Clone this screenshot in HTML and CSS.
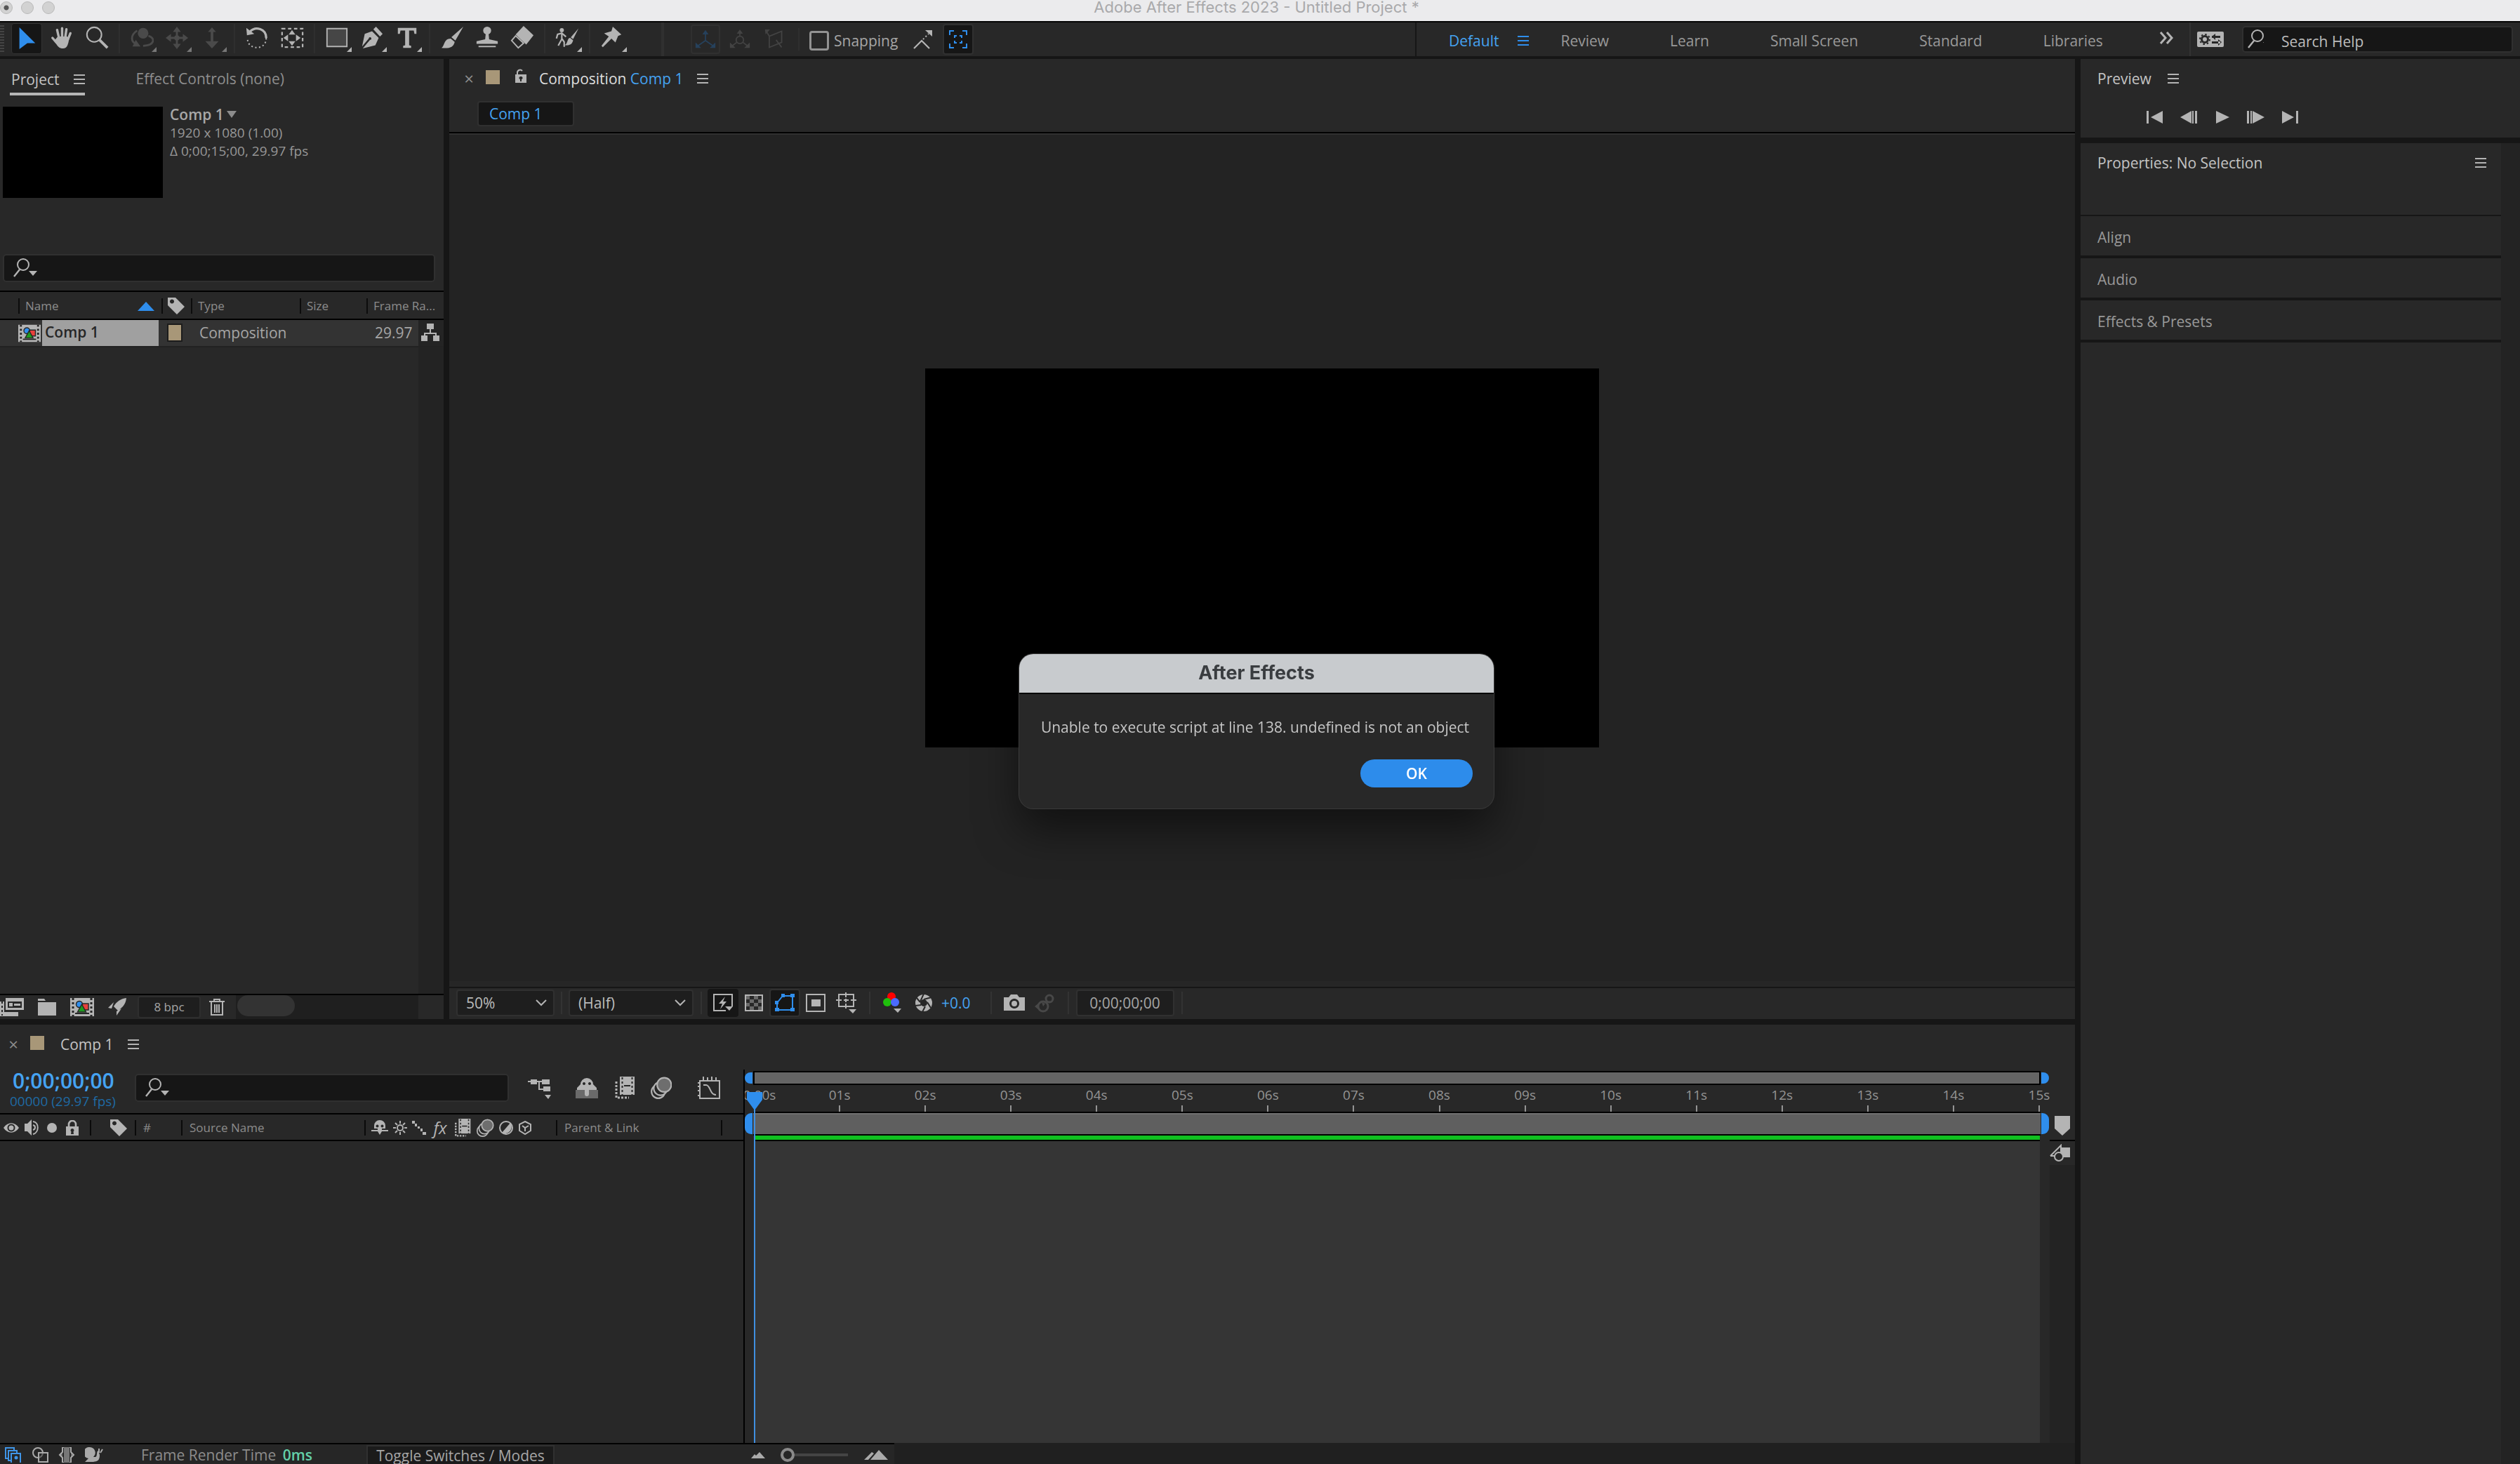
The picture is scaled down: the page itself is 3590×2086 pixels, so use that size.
FILE: index.html
```html
<!DOCTYPE html>
<html lang="en">
<head>
<meta charset="utf-8">
<title>Adobe After Effects 2023 - Untitled Project *</title>
<link rel="stylesheet" href="styles.css">
</head>
<body>
<svg class="defs" aria-hidden="true">
  <symbol id="menu" viewBox="0 0 16 14"><path fill="currentColor" d="M0 0h16v2H0zM0 6h16v2H0zM0 12h16v2H0z"/></symbol>
  <symbol id="find" viewBox="0 0 34 28"><circle cx="14" cy="9" r="8" fill="none" stroke="currentColor" stroke-width="2"/><path d="M9 16L1 26" stroke="currentColor" stroke-width="2.4"/><path class="drop" fill="currentColor" d="M22 18h12l-6 7z"/></symbol>
  <symbol id="tag" viewBox="0 0 24 24"><path fill="currentColor" fill-rule="evenodd" d="M0 0h11l13 13-11 11L0 11zM6 2.500a3 3 0 1 0 .01 0z"/></symbol>
  <symbol id="chev" viewBox="0 0 16 10"><path d="M1 1l7 7 7-7" fill="none" stroke="currentColor" stroke-width="2"/></symbol>
  <symbol id="film" viewBox="0 0 34 26"><path fill="#b4b4b4" d="M0 0h34v26H0z"/><path d="M4 0v26M30 0v26" stroke="#282828" stroke-width="3" stroke-dasharray="3 3"/><path d="M7 22h20" stroke="#282828" stroke-width="2"/><path fill="#e8413c" stroke="#282828" stroke-width="1.500" d="M16 8h10v9H16z"/><circle cx="13" cy="9" r="4.500" fill="#2f8eed" stroke="#282828" stroke-width="1.500"/><path fill="#1f9a1f" stroke="#282828" stroke-width="1.500" d="M16.500 9l6 11h-12z"/></symbol>
  <symbol id="shy" viewBox="0 0 24 22"><path fill="currentColor" fill-rule="evenodd" d="M4 12V8a8 8 0 0 1 16 0v4h-5v2h9v2h-9l-3 5-3-5H0v-2h9v-2zM8.500 6.500a2 2 0 1 0 .01 0zM15.500 6.500a2 2 0 1 0 .01 0z"/></symbol>
  <symbol id="frames" viewBox="0 0 28 32"><path fill="none" stroke="currentColor" stroke-width="3" stroke-dasharray="3 2" d="M2 7v23h18"/><path fill="currentColor" d="M7 0h21v26H7z"/><path d="M10.500 1v25M24.500 1v25" stroke="#282828" stroke-width="2" stroke-dasharray="3 3"/><path d="M13 13h9" stroke="#282828" stroke-width="2"/></symbol>
  <symbol id="blur" viewBox="0 0 28 30"><g fill="#282828" stroke="currentColor" stroke-width="2"><circle cx="10" cy="20" r="9"/><circle cx="13" cy="16" r="9"/><circle cx="18" cy="11" r="9.500" fill="#6e6e6e"/></g></symbol>
  <symbol id="corner" viewBox="0 0 8 8"><path fill="currentColor" d="M8 0v8H0z"/></symbol>
  <symbol id="lock" viewBox="0 0 18 22"><path d="M4 10V6a5 5 0 0 1 10 0v4" fill="none" stroke="currentColor" stroke-width="2.600"/><path fill="currentColor" fill-rule="evenodd" d="M0 9h18v13H0zM9 12a2.500 2.500 0 0 0-1.500 4.500L7 20h4l-.5-3.500A2.500 2.500 0 0 0 9 12z"/></symbol>
</svg>

<header class="titlebar">
  <span class="lights"><i class="on"></i><i></i><i></i></span>
  <h1>Adobe After Effects 2023 - Untitled Project *</h1>
</header>

<div class="toolbar">
  <div class="grip"></div>
  <div class="tools">
    <button class="tool active" aria-label="Selection"><svg viewBox="0 0 36 36"><path fill="#2f8eed" d="M7 1l24 24H19L7 34z"/></svg></button>
    <button class="tool" aria-label="Hand"><svg viewBox="0 0 36 36"><g fill="none" stroke="currentColor" stroke-width="3.600" stroke-linecap="round"><path d="M14 19L11 6M18.500 18V3.500M23 19l2-14M27 21l4-10M10 25l-6-7"/></g><path fill="currentColor" d="M12 16h14l3 3c-1 8-3 15-9 15-6 0-9-3-13-12z"/></svg></button>
    <button class="tool" aria-label="Zoom"><svg viewBox="0 0 36 36"><circle cx="14" cy="13" r="11" fill="none" stroke="currentColor" stroke-width="2.200"/><path d="M22 21l12 12" stroke="currentColor" stroke-width="4"/></svg></button>
    <span class="sep"></span>
    <button class="tool off" aria-label="Orbit"><svg viewBox="0 0 36 36"><circle cx="20" cy="11" r="8" fill="currentColor"/><path fill="none" stroke="currentColor" stroke-width="3" d="M11 7C0 14 2 24 9 27M20 30c20-1 17-13 8-15"/><path fill="currentColor" d="M9 21l7 10H4z"/></svg><svg class="cor"><use href="#corner"/></svg></button>
    <button class="tool off" aria-label="Pan camera"><svg viewBox="0 0 36 36"><path stroke="currentColor" stroke-width="3" d="M18 5v26M5 18h26"/><path fill="currentColor" d="M18 1l6 8H12zM18 35l6-8H12zM1 18l8-6v12zM35 18l-8-6v12z"/><circle cx="18" cy="18" r="4" fill="currentColor"/></svg><svg class="cor"><use href="#corner"/></svg></button>
    <button class="tool off" aria-label="Dolly"><svg viewBox="0 0 36 36"><path stroke="currentColor" stroke-width="4" d="M18 6v20"/><path fill="currentColor" d="M18 2l6 7H12zM18 34l10-11H8z"/></svg><svg class="cor"><use href="#corner"/></svg></button>
    <span class="sep"></span>
    <button class="tool" aria-label="Rotate"><svg viewBox="0 0 36 36"><path fill="none" stroke="currentColor" stroke-width="3.500" d="M8 8c8-8 24-4 24 10"/><path fill="none" stroke="currentColor" stroke-width="2.200" d="M32 18c0 20-27 18-28 3" stroke-dasharray="2.200 3.600"/><path fill="currentColor" d="M2 3l12 9-11 2z"/></svg></button>
    <button class="tool" aria-label="Anchor point"><svg viewBox="0 0 36 36"><path fill="none" stroke="currentColor" stroke-width="2.400" stroke-dasharray="5 4" d="M3 4h31v28H3z"/><path fill="currentColor" d="M18 6l5 7H13zM18 30l5-7H13zM5 18l7-5v10zM31 18l-7-5v10z"/></svg></button>
    <span class="sep"></span>
    <button class="tool" aria-label="Rectangle"><svg viewBox="0 0 36 36"><path fill="#464646" stroke="currentColor" stroke-width="2" d="M3 4h30v27H3z"/></svg><svg class="cor"><use href="#corner"/></svg></button>
    <button class="tool" aria-label="Pen"><svg viewBox="0 0 36 36"><path fill="currentColor" d="M24 1l10 11-4 4L20 5zM18 8l10 10-5 11L4 34l11-13a2 2 0 1 0-2-2L3 31l4-19z"/></svg><svg class="cor"><use href="#corner"/></svg></button>
    <button class="tool" aria-label="Type"><svg viewBox="0 0 36 36"><path fill="currentColor" d="M4 3h28v9h-3l-1-5h-7v22l3 1v3H12v-3l3-1V7H8l-1 5H4z"/></svg><svg class="cor"><use href="#corner"/></svg></button>
    <span class="sep"></span>
    <button class="tool" aria-label="Brush"><svg viewBox="0 0 36 36"><path fill="currentColor" d="M35 1L23 22l-6-5zM16 19l6 5c-2 9-9 10-20 9 5-2 3-14 14-14z"/></svg></button>
    <button class="tool" aria-label="Clone stamp"><svg viewBox="0 0 36 36"><circle cx="18" cy="7" r="6" fill="currentColor"/><path fill="currentColor" d="M16 10h4l1 10 13 3v4H2v-4l13-3zM5 30h26v2H5z"/></svg></button>
    <button class="tool" aria-label="Eraser"><svg viewBox="0 0 36 36"><path fill="currentColor" d="M20 0l15 14-11 14L8 13z"/><path fill="none" stroke="currentColor" stroke-width="2" d="M8 15L2 22l10 11 8-7z"/></svg></button>
    <span class="sep"></span>
    <button class="tool" aria-label="Roto brush"><svg viewBox="0 0 40 36"><circle cx="11" cy="5" r="3.500" fill="currentColor"/><path fill="none" stroke="currentColor" stroke-width="2.600" d="M2 19l2-7 7-2 7 6M11 10v10l-6 11M11 19l4 6v8"/><path fill="currentColor" d="M39 2L30 20l-4-3zM25 18l5 4c-2 7-6 9-14 8 5-2 4-12 9-12z"/></svg><svg class="cor"><use href="#corner"/></svg></button>
    <span class="sep"></span>
    <button class="tool" aria-label="Puppet pin"><svg viewBox="0 0 36 36"><path fill="currentColor" d="M19 1l13 12-5 2-4 10-6-6L4 32l-2-2 11-14-7-5 11-3z"/></svg><svg class="cor"><use href="#corner"/></svg></button>
  </div>
  <div class="snapbar">
    <button class="axis framed" aria-label="Local axis"><svg viewBox="0 0 34 34"><path fill="none" stroke="currentColor" stroke-width="2" d="M17 5v14L4 28M17 19l13 9"/><path fill="currentColor" d="M17 2l5 7H12zM1 22v9h9zM33 22v9h-9z"/></svg></button>
    <button class="axis" aria-label="World axis"><svg viewBox="0 0 34 34"><path fill="none" stroke="currentColor" stroke-width="2" d="M17 5v7M12 22l-8 6M22 22l8 6"/><circle cx="17" cy="18" r="6" fill="none" stroke="currentColor" stroke-width="2"/><path fill="currentColor" d="M17 1l5 7H12zM1 22v9h9zM33 22v9h-9z"/></svg></button>
    <button class="axis" aria-label="View axis"><svg viewBox="0 0 34 34"><path fill="none" stroke="currentColor" stroke-width="2" d="M9 12l20-8v18L9 30zM9 12L4 4M20 18l9 12"/><path fill="currentColor" d="M2 1h8l-7 8z"/></svg></button>
    <label class="snap"><input type="checkbox"><span>Snapping</span></label>
    <button class="plain" aria-label="Snap edges"><svg width="28" height="28" viewBox="0 0 28 28"><path fill="none" stroke="currentColor" stroke-width="2.200" d="M1 27l11-11 11 11"/><path stroke="currentColor" stroke-width="2" stroke-dasharray="2 3" d="M14 14l8-8"/><path fill="currentColor" d="M17 1h10v9z"/></svg></button>
    <button class="snapbox" aria-label="Snap features"><svg width="26" height="26" viewBox="0 0 26 26"><path fill="none" stroke="#2f8eed" stroke-width="2" d="M1 7V1h6M19 1h6v6M25 19v6h-6M7 25H1v-6M8 11V8h3M15 8h3v3M18 15v3h-3M11 18H8v-3"/></svg></button>
  </div>
  <nav class="workspaces">
    <a href="#" class="current">Default</a><svg class="burger blue"><use href="#menu"/></svg>
    <a href="#">Review</a><a href="#">Learn</a><a href="#">Small Screen</a><a href="#">Standard</a><a href="#">Libraries</a>
    <button class="plain" aria-label="More workspaces"><svg width="22" height="18" viewBox="0 0 22 18"><path fill="none" stroke="currentColor" stroke-width="3" d="M2 1l7 8-7 8M11 1l7 8-7 8"/></svg></button>
  </nav>
  <div class="help">
    <svg width="38" height="22" viewBox="0 0 38 22"><rect width="38" height="22" rx="2" fill="#b4b4b4"/><circle cx="11" cy="11" r="4.500" fill="none" stroke="#282828" stroke-width="3"/><circle cx="11" cy="11" r="7" fill="none" stroke="#282828" stroke-width="2" stroke-dasharray="2.500 3"/><path fill="#282828" d="M21 6h12v3H21zM26 3v9l-5-5zM21 14h12v3H21zM30 11v9l5-5z"/></svg>
    <label class="field"><svg class="find nodrop" width="34" height="28"><use href="#find"/></svg><input type="search" placeholder="Search Help" aria-label="Search Help"></label>
  </div>
</div>

<main class="workspace">
  <section class="panel project">
    <div class="tabs"><button class="tab sel">Project<svg class="burger"><use href="#menu"/></svg></button><button class="tab dim">Effect Controls (none)</button></div>
    <div class="info">
      <div class="thumb"></div>
      <div class="meta"><b>Comp 1<svg width="14" height="10" viewBox="0 0 14 10"><path fill="#8c8c8c" d="M0 0h14L7 10z"/></svg></b><p>1920 x 1080 (1.00)</p><p>Δ 0;00;15;00, 29.97 fps</p></div>
    </div>
    <label class="field projsearch"><svg class="find" width="34" height="28"><use href="#find"/></svg><input type="search" aria-label="Search project"></label>
    <table class="items">
      <colgroup><col class="c-lead"><col class="c-name"><col class="c-tag"><col class="c-type"><col class="c-size"><col><col class="c-end"></colgroup>
      <thead><tr><th></th><th><span class="sort">Name<svg width="24" height="13" viewBox="0 0 24 13"><path fill="#2f8eed" d="M12 0l12 13H0z"/></svg></span></th><th class="tagcell"><svg width="24" height="24"><use href="#tag"/></svg></th><th>Type</th><th>Size</th><th colspan="2" class="rate">Frame Ra...</th></tr></thead>
      <tbody><tr><td></td><td class="name"><svg width="32" height="26"><use href="#film"/></svg><span>Comp 1</span></td><td class="swcell"><i class="swatch ring"></i></td><td>Composition</td><td></td><td class="num">29.97</td><td class="tree"><svg width="26" height="26" viewBox="0 0 26 26"><path fill="#b4b4b4" d="M8 0h10v8H8zM0 17h9v8H0zM17 17h9v8h-9z"/><path fill="none" stroke="#b4b4b4" stroke-width="2" d="M13 8v6M5 18v-4h16v4"/></svg></td></tr></tbody>
    </table>
    <div class="rest"><i></i></div>
    <div class="projfoot">
      <svg width="34" height="26" viewBox="0 0 34 26"><path fill="#b4b4b4" fill-rule="evenodd" d="M8 0h26v17H8zM11 5v9h20V5zM0 5h6v15h20v6H0z"/><path fill="#b4b4b4" d="M13 7h5v5h-5zM20 8h9v3h-9z"/><path stroke="#282828" stroke-width="2" stroke-dasharray="3 3" d="M3 5v20"/></svg>
      <svg width="26" height="24" viewBox="0 0 26 24"><path fill="#b4b4b4" d="M0 0h9l2 3H0zM0 5h26v19H0z"/></svg>
      <svg width="34" height="26"><use href="#film"/></svg>
      <svg width="26" height="26" viewBox="0 0 26 26"><path fill="#b4b4b4" d="M26 0c-1 9-5 13-12 18l-6-6C12 5 18 1 26 0zM8 6L0 14l5 1zM19 15l-7 10v-6z"/></svg>
      <button class="bpc">8 bpc</button>
      <svg width="22" height="24" viewBox="0 0 22 24"><path fill="none" stroke="#b4b4b4" stroke-width="2" d="M0 4h22M7 3V1h8v2M3 5v18h16V5M8 8v12M11 8v12M14 8v12"/></svg>
      <div class="hscroll"><i></i></div>
    </div>
  </section>

  <section class="panel comp">
    <div class="tabs comptabs"><button class="x" aria-label="Close">×</button><i class="swatch"></i>
      <svg class="unlock" width="16" height="20" viewBox="0 0 16 20"><path d="M3 9V5a4 4 0 0 1 7-2" fill="none" stroke="#b4b4b4" stroke-width="2"/><path fill="#b4b4b4" fill-rule="evenodd" d="M0 8h16v12H0zM8 11a2 2 0 0 0-1 4v3h2v-3a2 2 0 0 0-1-4z"/></svg>
      <button class="tab bright">Composition <em>Comp 1</em><svg class="burger"><use href="#menu"/></svg></button></div>
    <div class="crumbs"><button>Comp 1</button></div>
    <div class="viewer"><div class="canvas"></div></div>
    <div class="compfoot">
      <span class="select mag"><select aria-label="Magnification"><option>50%</option></select><svg width="16" height="10"><use href="#chev"/></svg></span>
      <i class="bar"></i>
      <span class="select res"><select aria-label="Resolution"><option>(Half)</option></select><svg width="16" height="10"><use href="#chev"/></svg></span>
      <i class="bar"></i>
      <button class="v on" aria-label="Fast previews"><svg width="28" height="26" viewBox="0 0 28 26"><path fill="none" stroke="#b4b4b4" stroke-width="2" d="M18 24H1V1h26v17"/><path fill="#b4b4b4" d="M17 4L8 14h5l-3 8 9-11h-5zM17 18h11l-5 6z"/></svg></button>
      <button class="v" aria-label="Transparency grid"><svg width="26" height="24" viewBox="0 0 26 24"><path fill="#6a6a6a" d="M1 1h24v22H1z"/><path fill="#282828" d="M7 2h6v5H7zM19 2h5v5h-5zM2 7h5v5H2zM13 7h6v5h-6zM7 12h6v5H7zM19 12h5v5h-5zM2 17h5v5H2zM13 17h6v5h-6z"/><path fill="none" stroke="#b4b4b4" stroke-width="2" d="M1 1h24v22H1z"/></svg></button>
      <button class="v on mask" aria-label="Mask visibility"><svg width="30" height="26" viewBox="0 0 30 26"><path fill="none" stroke="#2f8eed" stroke-width="2" d="M4 23V13L12 3h14v20z"/><path fill="#2f8eed" d="M1 20h6v5H1zM23 20h6v5h-6zM23 0h6v5h-6zM10 0h5v5h-5zM1 10h5v5H1z"/></svg></button>
      <button class="v" aria-label="Region of interest"><svg width="28" height="26" viewBox="0 0 28 26"><path fill="none" stroke="#b4b4b4" stroke-width="2" d="M1 1h26v24H1z"/><path fill="#b4b4b4" d="M8 8h13v10H8z"/></svg></button>
      <button class="v" aria-label="Grid and guides"><svg width="30" height="30" viewBox="0 0 30 30"><path fill="none" stroke="#b4b4b4" stroke-width="2" d="M4 3h21v17H4zM0 11h8M21 11h8M14 0v7M14 16v7M11 11h7M14 9v5"/><path fill="#b4b4b4" d="M18 24h11l-5 6z"/></svg></button>
      <i class="bar"></i>
      <button class="v" aria-label="Channels"><svg width="28" height="30" viewBox="0 0 28 30"><circle cx="12" cy="6" r="6" fill="#f00"/><circle cx="6" cy="14" r="6" fill="#1fbf0c"/><circle cx="17" cy="14" r="6" fill="#4a6bff"/><path fill="#b4b4b4" d="M15 23h11l-5 6z"/></svg></button>
      <button class="v" aria-label="Reset exposure"><svg width="26" height="26" viewBox="0 0 26 26"><circle cx="13" cy="13" r="8.500" fill="none" stroke="#b4b4b4" stroke-width="7"/><path stroke="#282828" stroke-width="2" d="M8 11L13 0M13 8l11-3M18 12l5 8M15 18l-4 8M9 16L1 17M8 12L2 5"/></svg></button>
      <span class="expo">+0.0</span>
      <i class="bar"></i>
      <button class="v" aria-label="Snapshot"><svg width="30" height="24" viewBox="0 0 30 24"><path fill="#b4b4b4" fill-rule="evenodd" d="M0 4h7l3-4h9l3 4h8v19H0zM15 6a7 7 0 1 0 .01 0z"/><circle cx="15" cy="13" r="4" fill="#b4b4b4"/></svg></button>
      <button class="v" aria-label="Show snapshot"><svg width="30" height="28" viewBox="0 0 30 28"><circle cx="12" cy="19" r="7" fill="none" stroke="#484848" stroke-width="3"/><circle cx="21" cy="8" r="5" fill="none" stroke="#484848" stroke-width="3"/><path fill="#484848" d="M0 19l6-5v10zM12 19l-2-6 5 2z"/></svg></button>
      <i class="bar"></i>
      <button class="time">0;00;00;00</button>
      <i class="bar"></i>
    </div>
  </section>

  <section class="panel timeline">
    <div class="tltabs"><button class="x" aria-label="Close">×</button><i class="swatch"></i><button class="tab">Comp 1<svg class="burger"><use href="#menu"/></svg></button></div>
    <div class="tlbody">
      <div class="layers">
        <div class="tlhead">
          <div class="clock"><strong>0;00;00;00</strong><small>00000 (29.97 fps)</small></div>
          <label class="field"><svg class="find" width="34" height="28"><use href="#find"/></svg><input type="search" aria-label="Search layers"></label>
          <div class="tlicons">
            <svg width="34" height="32" viewBox="0 0 34 32"><path fill="#b4b4b4" d="M4 4h9v7H4zM20 4h11v7H20zM22 14h10v7H22zM24 26h9l-4 6z"/><path fill="none" stroke="#b4b4b4" stroke-width="2" d="M0 7h20M16 7v11h6"/></svg>
            <svg width="34" height="32" viewBox="0 0 34 32"><path fill="#6a6a6a" d="M1 19h32v12H1z"/><path fill="#b4b4b4" fill-rule="evenodd" d="M8 11a9 9 0 0 1 18 0l5 5v3H20v6a3 3 0 0 1-6 0v-6H3v-3zM13 8a2 2 0 1 0 .01 0zM21 8a2 2 0 1 0 .01 0z"/></svg>
            <svg width="28" height="32"><use href="#frames"/></svg>
            <svg width="30" height="32"><use href="#blur"/></svg>
            <svg class="graph" width="32" height="32" viewBox="0 0 32 32"><path fill="none" stroke="#b4b4b4" stroke-width="2" d="M3 6h28v25H3zM8 0v6M14 1v5M20 0v6M26 1v5M0 9h3M0 14h3M0 20h3M0 27h3M8 12h4c6 0 5 14 14 14"/></svg>
          </div>
        </div>
        <div class="cols">
          <div class="av"><svg width="22" height="14" viewBox="0 0 22 14"><path fill="#b4b4b4" fill-rule="evenodd" d="M0 7C6-2 16-2 22 7 16 16 6 16 0 7zM11 1.500a5.500 5.500 0 1 0 .01 0z"/><circle cx="11" cy="7" r="3.500" fill="#b4b4b4"/></svg>
          <svg width="24" height="24" viewBox="0 0 24 24"><path fill="#b4b4b4" d="M0 6h4l6-6v23l-6-6H0z"/><path fill="none" stroke="#b4b4b4" stroke-width="2" d="M12 8c4 1 4 6 0 7M12 3c9 1 9 16 0 18"/></svg>
          <svg width="14" height="14"><circle cx="7" cy="7" r="7" fill="#b4b4b4"/></svg>
          <svg class="lk" width="18" height="22"><use href="#lock"/></svg></div>
          <div class="lab"><svg width="24" height="24"><use href="#tag"/></svg></div>
          <div class="no">#</div>
          <div class="src">Source Name</div>
          <div class="sw">
            <svg width="24" height="22"><use href="#shy"/></svg>
            <svg width="20" height="20" viewBox="0 0 20 20"><circle cx="10" cy="10" r="4" fill="none" stroke="#b4b4b4" stroke-width="2"/><path stroke="#b4b4b4" stroke-width="2" d="M10 0v4M10 16v4M0 10h4M16 10h4M3 3l3 3M14 14l3 3M17 3l-3 3M6 14l-3 3"/></svg>
            <svg width="20" height="20" viewBox="0 0 20 20"><path fill="#b4b4b4" d="M0 0h4v4H0zM4 4h3v4H4zM8 8h3v3H8zM12 11h3v4h-3zM15 16h5v4h-5z"/></svg>
            <i class="fx">fx</i>
            <svg width="24" height="26"><use href="#frames"/></svg>
            <svg width="26" height="26"><use href="#blur"/></svg>
            <svg width="20" height="20" viewBox="0 0 20 20"><circle cx="10" cy="10" r="9" fill="#282828" stroke="#b4b4b4" stroke-width="2"/><path fill="#b4b4b4" d="M16 3A9.500 9.500 0 0 1 4 17z"/></svg>
            <svg width="20" height="20" viewBox="0 0 20 20"><path fill="none" stroke="#b4b4b4" stroke-width="2" d="M10 1l8 4v9l-8 5-8-5V5zM6 7l4 3 5-3M10 10v5"/></svg>
          </div>
          <div class="par">Parent &amp; Link</div>
          <div class="end"></div>
        </div>
      </div>
      <div class="tracks">
        <div class="nav"><i class="h left"></i><i class="fill"></i><i class="h right"></i></div>
        <div class="ruler"><span class="first">0:00s</span><span>01s</span><span>02s</span><span>03s</span><span>04s</span><span>05s</span><span>06s</span><span>07s</span><span>08s</span><span>09s</span><span>10s</span><span>11s</span><span>12s</span><span>13s</span><span>14s</span><span>15s</span></div>
        <div class="nav work"><i class="h left"></i><i class="fill"></i><i class="h right"></i></div>
        <div class="cache"></div>
        <div class="lane"></div>
        <div class="playhead"><svg width="22" height="26" viewBox="0 0 22 26"><path fill="#2f8eed" d="M0 0h22v11L11 26 0 11z"/></svg></div>
      </div>
      <div class="bins">
        <div class="marker"><svg width="22" height="28" viewBox="0 0 22 28"><path fill="#b4b4b4" d="M0 0h22v18L11 28 0 18z"/></svg></div>
        <svg width="30" height="26" viewBox="0 0 30 26"><path fill="#b4b4b4" d="M15 5h14v14H15z"/><path fill="none" stroke="#b4b4b4" stroke-width="2" d="M1 17L16 2v9M1 17h8"/><circle cx="13" cy="18" r="6" fill="#282828" stroke="#b4b4b4" stroke-width="2"/></svg>
        <div class="binrest"></div>
      </div>
    </div>
    <div class="status">
      <div class="stleft">
        <svg width="24" height="22" viewBox="0 0 24 22"><path fill="none" stroke="#3f95e8" stroke-width="2" d="M4 16H1V1h12v3M8 19H5V5h12v4M9 9h13v14H9z"/><circle cx="16" cy="15" r="2.500" fill="#3f95e8"/></svg>
        <svg width="24" height="22" viewBox="0 0 24 22"><circle cx="9" cy="8" r="7" fill="none" stroke="#aaa" stroke-width="2"/><path fill="#282828" fill-opacity=".5" stroke="#aaa" stroke-width="2" d="M10 8h13v13H10z"/></svg>
        <svg width="24" height="22" viewBox="0 0 24 22"><path fill="#6a6a6a" stroke="#aaa" stroke-width="2" d="M6 0v7l-4 4 4 4v7M18 0v7l4 4-4 4v7M6 0h12M6 22h12"/><path d="M12 0v22" stroke="#777" stroke-width="8"/></svg>
        <svg width="26" height="22" viewBox="0 0 26 22"><path fill="#aaa" d="M7 0a8 8 0 0 1 5 14h3c3 0 1-9 4-9l2 6c0 8-3 9-9 10H0l5-5A8 8 0 0 1 7 0z"/><path stroke="#aaa" stroke-width="2" d="M20 8V2M22 8l3-5"/></svg>
        <span class="frt">Frame Render Time <b>0ms</b></span>
        <button class="toggle">Toggle Switches / Modes</button>
        <svg class="m1" width="20" height="9" viewBox="0 0 20 9"><path fill="#aaa" d="M0 9l5-6 2 2 5-5 8 9z"/></svg>
        <input class="zoom" type="range" min="0" max="100" value="0" aria-label="Timeline zoom">
        <svg width="34" height="14" viewBox="0 0 34 14"><path fill="#aaa" d="M0 14L11 3l3 2-8 9zM9 14L21 0l13 14z"/></svg>
      </div>
    </div>
  </section>

  <aside class="side">
    <section class="preview"><div class="sidehead">Preview<svg class="burger"><use href="#menu"/></svg></div>
      <div class="transport">
        <button aria-label="First frame"><svg width="26" height="18" viewBox="0 0 26 18"><path fill="currentColor" d="M1 0h3v18H1zM24 0v18L7 9z"/></svg></button>
        <button aria-label="Previous frame"><svg width="26" height="18" viewBox="0 0 26 18"><path fill="currentColor" d="M17 0v18L1 9zM18 0h2v18h-2zM22 0h3v18h-3z"/></svg></button>
        <button aria-label="Play"><svg width="26" height="18" viewBox="0 0 26 18"><path fill="currentColor" d="M4 0l19 9-19 9z"/></svg></button>
        <button aria-label="Next frame"><svg width="26" height="18" viewBox="0 0 26 18"><path fill="currentColor" d="M0 0h3v18H0zM5 0h2v18H5zM8 0l17 9-17 9z"/></svg></button>
        <button aria-label="Last frame"><svg width="26" height="18" viewBox="0 0 26 18"><path fill="currentColor" d="M22 0h3v18h-3zM2 0l17 9-17 9z"/></svg></button>
      </div>
    </section>
    <div class="stack">
      <div class="stacked">
        <section class="props"><div class="sidehead">Properties: No Selection<svg class="burger"><use href="#menu"/></svg></div></section>
        <button>Align</button><button>Audio</button><button>Effects &amp; Presets</button>
      </div>
      <div class="gutter"></div>
    </div>
  </aside>
</main>

<div class="overlay">
  <div class="dialog" role="alertdialog" aria-labelledby="dt" aria-describedby="dm">
    <h2 id="dt">After Effects</h2>
    <p id="dm">Unable to execute script at line 138. undefined is not an object</p>
    <button>OK</button>
  </div>
</div>
</body>
</html>
```

FILE: styles.css
```css
* { box-sizing: border-box; }
html, body { margin: 0; height: 100%; }
body {
  display: flex; flex-direction: column; overflow: hidden;
  background: #161616; color: #a6a6a6;
  font: 21px/28px "Open Sans", "Noto Sans", sans-serif;
}
button, input, select { font: inherit; color: inherit; background: none; border: 0; padding: 0; margin: 0; outline: 0; }
a { color: inherit; text-decoration: none; }
h1, h2, p { margin: 0; font-weight: 400; }
svg { display: block; flex: none; color: #b4b4b4; }
.defs { position: absolute; width: 0; height: 0; }
.burger { width: 16px; height: 14px; margin-left: 20px; }
.blue { color: #2f8eed; }

.titlebar { position: relative; flex: none; height: 32px; padding-right: 10px; background: #ebebed; border-bottom: 2px solid #050505; text-align: center; }
.titlebar h1 { font: 22px/20px Inter, sans-serif; color: #a9a9ab; }
.lights { position: absolute; left: 0; top: 2px; display: flex; gap: 12px; }
.lights i { width: 18px; height: 18px; border: 1px solid #b9b9b9; border-radius: 9px; background: #d2d2d2; }
.lights .on { background: radial-gradient(circle, #555 3px, #d2d2d2 4px); }

.toolbar { flex: none; height: 48px; display: flex; background: #282828; }
.grip { width: 6px; margin: 4px 7px 6px 0; background: repeating-linear-gradient(#444 0 2px, #282828 2px 4px); }
.tools { display: flex; width: 933px; border-right: 4px solid #303030; }
.tool { position: relative; width: 50px; display: grid; place-items: center; padding-bottom: 4px; }
.tool > svg:first-child { width: 34px; height: 34px; }
.tool.active { width: 44px; height: 44px; margin: 1px 3px; background: #161616; border: 1px solid #333; border-radius: 4px; padding: 0; }
.tool .cor { position: absolute; right: 4px; bottom: 6px; width: 7px; height: 7px; }
.off svg { color: #4a4a4a; }
.off .cor { color: #777; }
.sep { width: 2px; margin: 2px 6px 4px; background: #2f2f2f; }
.snapbar { flex: 1; display: flex; align-items: center; padding-left: 38px; }
.axis { width: 42px; height: 42px; margin-right: 7px; display: grid; place-items: center; }
.axis svg { width: 30px; height: 30px; color: #434343; }
.axis.framed { border: 2px solid #303030; border-radius: 4px; }
.axis.framed svg { color: #26415c; }
.snap { display: flex; align-items: center; gap: 7px; margin-left: 6px; padding: 4px 0 0 14px; border-left: 2px solid #2f2f2f; }
.snap input { appearance: none; width: 28px; height: 28px; border: 3px solid #929292; border-radius: 4px; }
.plain { margin-left: 22px; }
.snapbox { width: 44px; height: 44px; margin-left: 14px; display: grid; place-items: center; background: #161616; border: 2px solid #303030; border-radius: 4px; }
.workspaces { display: flex; align-items: center; width: 1103px; padding: 4px 0 0 46px; border-left: 2px solid #161616; white-space: nowrap; color: #999; }
.workspaces .current { color: #45a3f2; }
.workspaces .burger { margin: 0 45px 0 27px; }
.workspaces a + a { margin-left: 87px; }
.workspaces .plain { margin: 0 0 8px 80px; }
.help { width: 471px; display: flex; align-items: center; gap: 26px; padding: 0 10px 0 9px; border-left: 2px solid #333; }
.field { flex: 1; display: flex; align-items: center; height: 38px; padding-left: 13px; gap: 14px; background: #161616; border: 2px solid #303030; border-radius: 5px; overflow: hidden; }
.field input { flex: 1; min-width: 0; appearance: none; }
.field input::placeholder { color: #bdbdbd; opacity: 1; }
.help .field { padding-left: 6px; }
.nodrop { clip-path: inset(0 11px 0 0); }
.help .field input { padding-top: 6px; }

.workspace { flex: 1; min-height: 0; margin-top: 4px; display: grid; gap: 8px; grid-template-columns: 632fr 2316fr 626fr; grid-template-rows: 1368fr 626fr; }
.panel { min-width: 0; min-height: 0; display: flex; flex-direction: column; background: #282828; overflow: hidden; }
.timeline { grid-row: 2; grid-column: 1 / 3; }
.side { grid-row: 1 / 3; grid-column: 3; display: flex; flex-direction: column; gap: 8px; }

.tabs { flex: none; display: flex; align-items: flex-start; height: 60px; padding: 14px 0 0 14px; }
.tab { display: flex; align-items: center; white-space: pre; color: #c4c4c4; }
.tab.sel { height: 38px; padding: 0 0 4px 2px; border-bottom: 4px solid #b6b6b6; margin-right: 73px; }
.tab.dim { height: 28px; color: #8e8e8e; }
.tab em { font-style: normal; color: #45a3f2; }
.bright { color: #dedede; }
.swatch { width: 20px; height: 20px; background: #a89778; }
.x { font-size: 24px; color: #8c8c8c; width: 16px; }

.info { display: flex; gap: 10px; padding: 8px 4px 0; height: 138px; }
.thumb { width: 228px; background: #000; }
.meta { margin-top: -2px; font-size: 19px; line-height: 26px; color: #979797; white-space: nowrap; }
.meta b { display: flex; align-items: center; gap: 4px; font-size: 21px; font-weight: 600; color: #a8a8a8; }
.projsearch { flex: none; margin: 80px 12px 12px 4px; height: 40px; }

.items { width: 100%; table-layout: fixed; border-collapse: collapse; flex: none; }
.c-lead { width: 26px; } .c-name { width: 204px; } .c-tag { width: 42px; } .c-type { width: 155px; } .c-size { width: 95px; } .c-end { width: 36px; }
.items th { height: 40px; padding: 2px 0 0 10px; text-align: left; font-size: 17px; font-weight: 400; line-height: 24px; color: #8c8c8c; border: 0 solid #000; border-width: 2px 0; background: linear-gradient(#0c0c0c, #0c0c0c) no-repeat 0 9px / 2px 22px; white-space: nowrap; overflow: hidden; }
.items th:first-child { background: none; }
.items th.tagcell { padding-left: 9px; }
.sort { display: flex; align-items: center; justify-content: space-between; padding-right: 10px; }
.items td { height: 37px; padding: 0 0 1px 12px; background: #333; white-space: nowrap; }
.items td.name { display: flex; align-items: center; gap: 2px; padding: 0 4px 0 0; }
.name span { flex: 1; height: 37px; padding: 3px 4px; background: #a0a0a0; color: #262626; font-weight: 600; }
.items td.swcell { padding-left: 8px; }
.swatch.ring { display: block; width: 22px; height: 26px; border: 2px solid #1c1c1c; }
.items td.num { text-align: right; padding-right: 10px; }
.items td.tree { padding-left: 4px; background: #242424; }
.rest { flex: 1; display: flex; justify-content: flex-end; border-top: 2px solid #222; }
.rest i { width: 36px; background: #232323; }
.projfoot { flex: none; display: flex; align-items: center; height: 36px; gap: 20px; border-top: 2px solid #000; }
.bpc { width: 90px; height: 32px; margin: 0 -8px 0 -4px; background: #1e1e1e; border: 2px solid #2e2e2e; border-radius: 4px; font-size: 17px; }
.hscroll { flex: 1; margin: 0 36px 0 -4px; height: 34px; background: #1f1f1f; padding: 0 2px; }
.hscroll i { display: block; width: 82px; height: 30px; border-radius: 15px; background: #333; }

.comptabs { height: 60px; padding-left: 20px; }
.comptabs .swatch { margin: 2px 22px 0 16px; }
.comptabs .unlock { margin-right: 18px; }
.crumbs { flex: none; height: 46px; border-bottom: 2px solid #000; padding-left: 40px; }
.crumbs button { width: 138px; height: 36px; padding-left: 15px; text-align: left; background: #161616; border: 2px solid #303030; border-radius: 4px; color: #45a3f2; }
.viewer { flex: 1; min-height: 0; display: grid; place-items: center; background: #232323; border-top: 2px solid #303030; border-bottom: 8px solid #262626; }
.canvas { width: 960px; height: 540px; background: #000; }
.compfoot { flex: none; height: 46px; display: flex; align-items: center; padding: 0 0 2px 10px; border-top: 2px solid #161616; }
.select { position: relative; display: flex; height: 38px; border: 2px solid #303030; border-radius: 4px; background: #1e1e1e; }
.select select { width: 100%; padding-left: 12px; appearance: none; color: #bcbcbc; }
.select svg { position: absolute; right: 9px; top: 12px; pointer-events: none; }
.mag { width: 140px; } .res { width: 178px; }
.bar { width: 2px; height: 32px; margin: 0 10px; background: #333; }
.mag + .bar { margin: 0 9px; }
.v { width: 44px; height: 40px; display: grid; place-items: center; }
.res + .bar { margin-right: 8px; }
.v.on { background: #161616; border-radius: 4px; }
.v.on.mask { border: 2px solid #303030; }
.expo { color: #45a3f2; margin: 0 18px 0 3px; }
.time { width: 140px; height: 38px; background: #1e1e1e; border: 2px solid #303030; border-radius: 4px; }

.tltabs { flex: none; height: 64px; display: flex; align-items: flex-start; padding: 14px 11px; }
.tltabs .swatch { margin: 2px 23px 0 16px; }
.tlbody { flex: 1; min-height: 0; display: grid; grid-template-columns: 1061px 1fr 36px; }
.layers { border-right: 2px solid #000; }
.tlhead { height: 62px; display: flex; padding: 2px 33px 0 14px; }
.clock { width: 178px; white-space: nowrap; margin-top: -3px; }
.clock strong { display: block; padding-left: 4px; font-size: 30px; line-height: 34px; font-weight: 600; color: #45a3f2; }
.clock small { display: block; font-size: 19px; line-height: 24px; color: #1f6aa3; }
.tlhead .field { margin-top: 4px; height: 40px; }
.tlicons { display: flex; align-items: center; height: 48px; gap: 23px; margin-left: 27px; }
.tlicons svg:nth-child(2) { margin-left: 10px; }
.graph { margin-left: 14px; }
.cols { height: 40px; display: flex; align-items: center; padding-top: 2px; border: 0 solid #000; border-width: 2px 0; font-size: 17px; color: #8c8c8c; }
.cols > div { height: 22px; display: flex; align-items: center; border-left: 2px solid #0a0a0a; white-space: nowrap; }
.cols .av { width: 128px; border: 0; padding-left: 5px; gap: 8px; }
.lk { margin-left: 5px; }
.lab { width: 64px; padding-left: 27px; }
.no { width: 66px; padding-left: 10px; }
.src { width: 261px; padding-left: 10px; }
.sw { width: 273px; padding-left: 8px; gap: 7px; }
.fx { font: italic 24px/22px "Open Sans", sans-serif; color: #b4b4b4; width: 26px; text-align: center; }
.par { width: 235px; padding-left: 10px; }

.tracks { position: relative; display: flex; flex-direction: column; overflow: hidden; }
.nav { display: flex; height: 20px; margin-top: 2px; padding-right: 1px; gap: 1px; }
.nav .fill { flex: 1; background: #656565; border: 2px solid #000; }
.h { width: 11px; margin: 2px 0; background: #2f8eed; border-radius: 9px 0 0 9px; }
.h.right { border-radius: 0 9px 9px 0; }
.ruler { height: 38px; display: flex; justify-content: space-between; padding: 3px 15px 0 13px; font-size: 19px; line-height: 22px; color: #949494; }
.ruler span { width: 0; display: flex; flex-direction: column; align-items: center; white-space: nowrap; }
.ruler span::after { content: ""; width: 2px; height: 9px; margin-top: 4px; background: #949494; }
.ruler .first { padding-left: 8px; margin-right: -8px; }
.ruler .first::after { background: none; }
.nav.work { height: 34px; margin: 0; }
.work .fill { background: #5f5f5f; border-width: 2px 0; box-shadow: inset 0 2px #6f6f6f; }
.cache { height: 8px; margin: 0 14px; background: #10c020; border-bottom: 2px solid #000; }
.lane { flex: 1; margin: 0 14px; background: #353535; }
.playhead { position: absolute; left: 3px; top: 32px; bottom: 0; width: 22px; background: linear-gradient(#3f8fe0, #3f8fe0) 10px 0 / 2px 100% no-repeat; }
.bins { display: flex; flex-direction: column; }
.marker { height: 102px; display: flex; flex-direction: column; justify-content: flex-end; align-items: center; padding: 0 0 6px 0; border-bottom: 2px solid #000; }
.bins > svg { margin: 4px 0; }
.binrest { flex: 1; background: #232323; }
.status { flex: none; height: 30px; background: #202020; overflow: hidden; }
.stleft { width: 1274px; height: 30px; display: flex; align-items: center; background: #262626; border-top: 2px solid #000; padding: 2px 0 0 7px; gap: 14px; white-space: nowrap; }
.frt { width: 307px; margin-left: 40px; color: #8c8c8c; }
.frt b { margin-left: 4px; font-weight: 600; color: #63cfa8; }
.toggle { width: 268px; height: 28px; background: #1b1b1b; border: 2px solid #303030; border-width: 2px 2px 0; line-height: 26px; }
.m1 { margin: 0 8px 0 266px; }
.zoom { appearance: none; width: 96px; height: 20px; margin-right: 9px; background: linear-gradient(#444, #444) 0 8px / 100% 4px no-repeat; }
.zoom::-webkit-slider-thumb { appearance: none; width: 20px; height: 20px; border: 4px solid #8a8a8a; border-radius: 10px; background: #262626; }

.preview { height: 112px; background: #282828; }
.sidehead { display: flex; align-items: center; height: 56px; padding: 0 21px 0 24px; color: #c4c4c4; }
.sidehead .burger { margin-left: 23px; }
.transport { display: flex; gap: 22px; padding: 18px 0 0 93px; }
.stack { flex: 1; display: flex; }
.stacked { flex: 1; background: #282828; }
.props { height: 104px; border-bottom: 2px solid #161616; }
.props .burger { margin-left: auto; }
.stacked > button { display: block; width: 100%; height: 60px; padding: 3px 0 0 24px; text-align: left; color: #999; border-bottom: 4px solid #161616; }
.gutter { width: 27px; background: #232323; }

.overlay { position: fixed; inset: 0; display: flex; align-items: center; justify-content: center; padding: 0 10px 2px 0; pointer-events: none; }
.dialog { width: 676px; height: 220px; display: flex; flex-direction: column; align-items: center; background: #282828; border-radius: 20px; overflow: hidden; box-shadow: 0 0 0 1px #3a3a3a, 0 30px 60px rgba(0, 0, 0, .5); pointer-events: auto; }
.dialog h2 { width: 100%; height: 57px; border-bottom: 2px solid #000; background: #c8cbce; text-align: center; font: 700 27px/54px Inter, sans-serif; color: #3a3d40; }
.dialog p { margin: 33px 4px 0 0; color: #c6c6c6; white-space: nowrap; }
.dialog button { align-self: flex-end; width: 160px; height: 40px; margin: 32px 30px 0 0; border-radius: 20px; background: #2d8ceb; color: #fff; font-weight: 600; }
```
